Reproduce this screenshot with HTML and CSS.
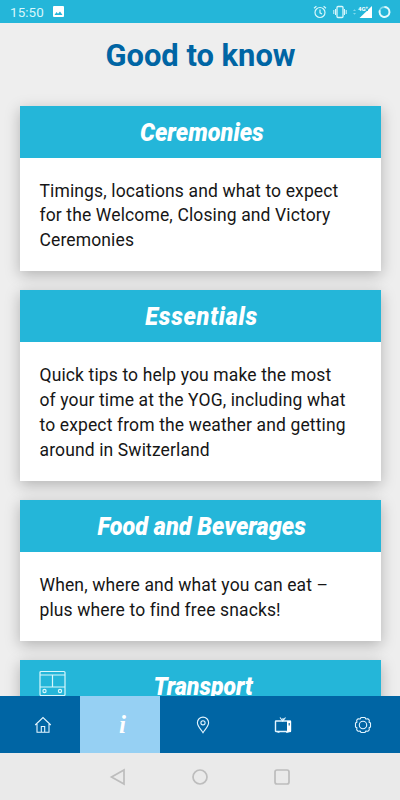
FILE: index.html
```html
<!DOCTYPE html>
<html lang="en">
<head>
    <meta charset="UTF-8">
    <meta name="viewport" content="width=device-width, initial-scale=1.0">
    <title>Good to know</title>
    <link rel="stylesheet" href="styles.css">
</head>
<body>

<header class="status-bar">
    <span class="clock">15:50</span>
    <svg class="photo" width="11" height="11" viewBox="0 0 11 11">
        <rect width="11" height="11" rx="1" fill="#fff"/>
        <path d="M1.5 9l2-3 1.5 1.7L7 5.5 9.5 9z" fill="#24b6d9"/>
    </svg>
    <div class="status-icons">
        <svg width="14" height="14" viewBox="0 0 14 14" fill="none" stroke="#d8f7fc" stroke-width="1.2">
            <circle cx="7" cy="7.5" r="5"/>
            <path d="M7 4.5v3.3l2 1.2M1 3.2l2.4-2M13 3.2l-2.4-2"/>
        </svg>
        <svg width="14" height="14" viewBox="0 0 14 14" fill="none" stroke="#d8f7fc" stroke-width="1">
            <rect x="4" y="1.5" width="6" height="11" rx="1" stroke-width="1.3"/>
            <path d="M2.5 4v6M.8 5v4M11.5 4v6M13.2 5v4"/>
        </svg>
        <svg width="20" height="14" viewBox="0 0 20 14" fill="#fff">
            <path d="M0 6l1.5-1.7L3 6zM0 8h3L1.5 9.7z" fill="#7fd9eb"/>
            <path d="M19 1v12H6.5z"/>
            <path d="M5 0h10v6H5z" fill="#24b6d9"/>
            <text class="network" x="5" y="5.5">4G⁺</text>
        </svg>
        <svg width="13" height="14" viewBox="0 0 13 14" fill="none" stroke-width="1.8">
            <circle cx="6.5" cy="7" r="5" stroke="#7fd9eb"/>
            <path d="M6.5 2a5 5 0 1 1-4.7 3.3" stroke="#e4fafd"/>
        </svg>
    </div>
</header>

<main class="content">
    <h1>Good to know</h1>

    <section class="card">
        <h2><span>Ceremonies</span></h2>
        <p>Timings, locations and what to expect<br>for the Welcome, Closing and Victory<br>Ceremonies</p>
    </section>

    <section class="card">
        <h2><span class="essentials">Essentials</span></h2>
        <p>Quick tips to help you make the most<br>of your time at the YOG, including what<br>to expect from the weather and getting<br>around in Switzerland</p>
    </section>

    <section class="card">
        <h2><span>Food and Beverages</span></h2>
        <p>When, where and what you can eat –<br>plus where to find free snacks!</p>
    </section>

    <section class="card">
        <h2>
            <svg class="bus" width="28" height="30" viewBox="0 0 28 30" fill="none" stroke="#d8f7fc" stroke-width="1.2">
                <rect x="1" y="1.500" width="25" height="24" rx="1"/>
                <path d="M1 5h25M1 17h25M13.5 5v12"/>
                <circle cx="5.5" cy="21" r="1.6"/>
                <circle cx="21" cy="21" r="1.6"/>
            </svg>
            <span class="transport">Transport</span>
        </h2>
    </section>
</main>

<nav class="tab-bar">
    <a class="tab">
        <svg width="18" height="18" viewBox="0 0 18 18">
            <path d="M1.2 9L9 1.5 16.8 9M3 8v8.3h12V8M7.3 16v-5.500h3.400V16"/>
        </svg>
    </a>
    <a class="tab active">i</a>
    <a class="tab">
        <svg width="18" height="18" viewBox="0 0 18 18">
            <path d="M9 16.7C7 13.500 3.400 10 3.400 6.700a5.600 5.600 0 0 1 11.200 0C14.600 10 11 13.500 9 16.700z"/>
            <circle cx="9" cy="6.8" r="2.1"/>
        </svg>
    </a>
    <a class="tab">
        <svg width="18" height="18" viewBox="0 0 18 18">
            <rect x="1.500" y="5" width="15" height="10.500" rx=".5" stroke-width="1.400"/>
            <path d="M6 1.500L8.700 5 11.500 1.500M9 2v3M3.500 16.300h2M12 16.300h2.500"/>
            <path d="M13 5h4v11h-4z" fill="#fff" stroke="none"/>
            <path d="M15.200 7v2.500" stroke="#0065a4"/>
        </svg>
    </a>
    <a class="tab">
        <svg width="18" height="18" viewBox="0 0 18 18">
            <path d="M7 1.500h4l.8 1.500 2-.3 1.500 1.500-.2 2 1.400.8v4l-1.400.8.2 2-1.500 1.500-2-.3-.8 1.500H7l-.8-1.500-2 .3-1.500-1.500.2-2L1.500 11V7l1.400-.8-.2-2 1.500-1.500 2 .3z" stroke-linejoin="round"/>
            <circle cx="9" cy="9" r="3.700"/>
        </svg>
    </a>
</nav>

<footer class="system-bar">
    <svg width="18" height="18" viewBox="0 0 18 18"><path d="M15 2v14L2.500 9z"/></svg>
    <svg width="18" height="18" viewBox="0 0 18 18"><circle cx="9" cy="9" r="7"/></svg>
    <svg width="18" height="18" viewBox="0 0 18 18"><rect x="2" y="2" width="14" height="14" rx="2"/></svg>
</footer>

</body>
</html>
```
FILE: styles.css
```css
* {
    box-sizing: border-box;
}
body {
    margin: 0;
    height: 800px;
    display: flex;
    flex-direction: column;
    overflow: hidden;
    background-color: #eee;
    font-family: Roboto, sans-serif;
}
.status-bar {
    flex: none;
    height: 23px;
    padding: 0 9px 0 10px;
    display: flex;
    align-items: center;
    background-color: #24b6d9;
    color: #d8f7fc;
}
.clock {
    font-size: 13.4px;
    letter-spacing: 0.1px;
    line-height: 23px;
    padding-top: 1px;
}
.photo {
    margin-left: 9px;
}
.status-icons {
    margin-left: auto;
    display: flex;
    gap: 5px;
}
.status-icons svg:first-child {
    margin-right: 1px;
}
.status-icons svg:nth-child(2) {
    margin-right: 1px;
}
.network {
    font-size: 6px;
    font-weight: bold;
}
.content {
    height: 673px;
    flex: none;
    padding: 0 19px 0 20px;
    overflow: hidden;
}
h1 {
    margin: 0;
    height: 82.5px;
    padding-top: 15px;
    color: #0065a4;
    font-size: 30.9px;
    line-height: 36px;
    text-align: center;
}
.card {
    margin-bottom: 19.5px;
    background-color: #fff;
    box-shadow: 0 4px 14px rgba(0, 0, 0, 0.25);
}
h2 {
    position: relative;
    height: 52px;
    margin: 0;
    background-color: #24b6d9;
    color: #fff;
    font-size: 26.5px;
    font-weight: 900;
    font-style: italic;
    line-height: 52px;
    text-align: center;
    white-space: nowrap;
}
h2 span {
    display: inline-block;
    transform: translateX(1px) scaleX(0.885);
}
h2 .essentials {
    letter-spacing: 0.8px;
}
h2 .transport {
    transform: translateX(3px) scaleX(0.87);
}
.bus {
    position: absolute;
    left: 19px;
    top: 10px;
}
.card p {
    margin: 0;
    padding: 21px 20px 18px 19.5px;
    font-size: 17.5px;
    line-height: 24.8px;
    letter-spacing: 0.13px;
    white-space: nowrap;
    color: #161616;
}
.tab-bar {
    flex: none;
    height: 57px;
    display: flex;
    background-color: #0065a4;
}
.tab {
    flex: 1;
    padding-left: 5px;
    display: flex;
    align-items: center;
    justify-content: center;
}
.tab svg {
    fill: none;
    stroke: #e2f5ff;
    stroke-width: 1.1;
}
.tab.active {
    background-color: #96d0f3;
    color: #fff;
    font-family: "Liberation Serif", serif;
    font-size: 25px;
    font-weight: bold;
    font-style: italic;
}
.system-bar {
    flex: 1;
    display: flex;
    justify-content: center;
    align-items: center;
    gap: 64px;
    background-color: #eaeaea;
}
.system-bar svg {
    fill: none;
    stroke: #bdbdbd;
    stroke-width: 1.7;
}
```
